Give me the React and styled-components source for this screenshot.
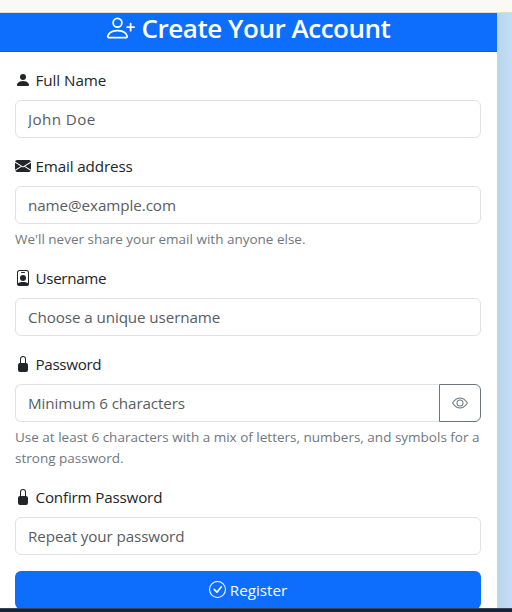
import React from "react";
import styled, { createGlobalStyle } from "styled-components";
import {
  BsPersonPlus,
  BsPersonFill,
  BsEnvelopeFill,
  BsPersonBadge,
  BsLockFill,
  BsEye,
  BsCheckCircle,
} from "react-icons/bs";

const GlobalStyle = createGlobalStyle`
  *, *::before, *::after { box-sizing: border-box; }
  body {
    margin: 0;
    overflow: hidden;
    font-family: "Segoe UI", "Open Sans", "Noto Sans", sans-serif;
    color: #212529;
  }
`;

const Window = styled.div`
  display: flex;
  flex-direction: column;
  width: 512px;
  height: 612px;
  overflow: hidden;
`;

const TopStrip = styled.div`
  flex: 0 0 13px;
  background: #faf9f5;
  border-bottom: 1px solid #e0ddd6;
`;

const Page = styled.main`
  flex: 0 0 595px;
  display: flex;
  background: linear-gradient(to right, #b9d5ec 497px, #c2dff7 512px);
`;

const BottomStrip = styled.div`
  flex: 0 0 4px;
  background: #18213a;
  border-top: 1px solid #3c4552;
`;

const Card = styled.section`
  width: 497px;
  height: 595px;
  background: #fff;
`;

const CardHeader = styled.header`
  height: 39px;
  display: flex;
  justify-content: center;
  align-items: flex-start;
  background: #0d6efd;
  border-bottom: 1px solid #0b5ed7;
  color: #fff;

  svg {
    width: 28px;
    height: 28px;
    margin: 1px 7px 0 0;
  }
`;

const Text = styled.span`
  letter-spacing: ${(p) => p.$spacing || 0}px;
  white-space: nowrap;
`;

const Title = styled.h1`
  margin: 0;
  font-size: 26px;
  line-height: 31px;
  font-weight: 600;
  letter-spacing: -0.47px;
  white-space: nowrap;
`;

const Form = styled.form`
  padding: 16px 16px 0 15px;
`;

const Field = styled.div`
  margin-bottom: 16px;
`;

const Label = styled.label`
  display: flex;
  align-items: center;
  gap: 4.5px;
  height: 24px;
  margin-bottom: 8px;
  font-size: 15.2px;

  svg {
    width: 16px;
    height: 16px;
  }
`;

const InputGroup = styled.div`
  display: flex;
`;

const Input = styled.input`
  flex: 1;
  min-width: 0;
  height: 38px;
  padding: 0 12px;
  border: 1px solid #dee2e6;
  border-radius: 6px;
  ${(p) => p.$joined && "border-right: 0; border-radius: 6px 0 0 6px;"}
  background: #fff;
  font-family: inherit;
  font-size: 15.2px;
  letter-spacing: ${(p) => p.$spacing || 0}px;
  outline: none;

  &::placeholder {
    color: #595c5f;
    opacity: 1;
  }
`;

const RevealButton = styled.button`
  display: flex;
  align-items: center;
  justify-content: center;
  width: 42px;
  height: 38px;
  padding: 0;
  border: 1px solid #6c757d;
  border-radius: 0 6px 6px 0;
  background: #fff;
  color: #6c757d;
`;

const Hint = styled.div`
  display: flex;
  flex-direction: column;
  padding-top: 5px;
  font-size: 13.5px;
  line-height: 21px;
  color: #6f777e;
`;

const SubmitButton = styled.button`
  display: flex;
  align-items: center;
  justify-content: center;
  gap: 4px;
  width: 100%;
  height: 38px;
  padding: 0 0 1px;
  border: 0;
  border-radius: 6px;
  background: #0d6efd;
  color: #fff;
  font-family: inherit;
  font-size: 15.2px;

  svg {
    width: 17px;
    height: 17px;
  }
`;

function FormField({ icon: Icon, label, labelSpacing, placeholder, spacing, type = "text", action, hints }) {
  return (
    <Field>
      <Label>
        <Icon />
        <Text $spacing={labelSpacing}>{label}</Text>
      </Label>
      <InputGroup>
        <Input type={type} placeholder={placeholder} $spacing={spacing} $joined={Boolean(action)} />
        {action}
      </InputGroup>
      {hints && (
        <Hint>
          {hints.map((hint) => (
            <Text key={hint}>{hint}</Text>
          ))}
        </Hint>
      )}
    </Field>
  );
}

export default function App() {
  return (
    <Window>
      <GlobalStyle />
      <TopStrip />
      <Page>
        <Card>
          <CardHeader>
            <BsPersonPlus />
            <Title>Create Your Account</Title>
          </CardHeader>
          <Form>
            <FormField icon={BsPersonFill} label="Full Name" labelSpacing={-0.05} placeholder="John Doe" spacing={0.4} />
            <FormField
              icon={BsEnvelopeFill}
              label="Email address"
              labelSpacing={-0.13}
              placeholder="name@example.com"
              spacing={-0.07}
              hints={["We'll never share your email with anyone else."]}
            />
            <FormField
              icon={BsPersonBadge}
              label="Username"
              labelSpacing={-0.33}
              placeholder="Choose a unique username"
              spacing={-0.09}
            />
            <FormField
              icon={BsLockFill}
              label="Password"
              labelSpacing={-0.33}
              type="password"
              placeholder="Minimum 6 characters"
              spacing={-0.1}
              action={<RevealButton type="button" aria-label="Show password"><BsEye size={16} /></RevealButton>}
              hints={[
                "Use at least 6 characters with a mix of letters, numbers, and symbols for a",
                "strong password.",
              ]}
            />
            <FormField
              icon={BsLockFill}
              label="Confirm Password"
              labelSpacing={-0.18}
              type="password"
              placeholder="Repeat your password"
              spacing={-0.1}
            />
            <SubmitButton type="button">
              <BsCheckCircle />
              <Text>Register</Text>
            </SubmitButton>
          </Form>
        </Card>
      </Page>
      <BottomStrip />
    </Window>
  );
}
